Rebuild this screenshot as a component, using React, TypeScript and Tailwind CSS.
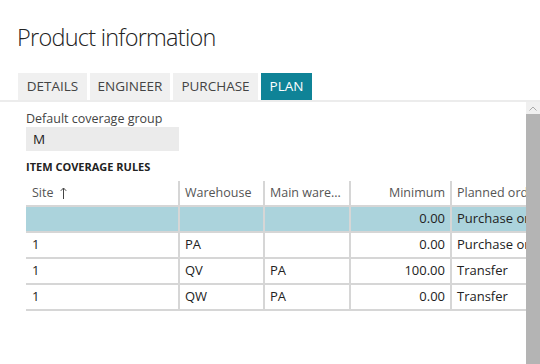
import React from "react";

const rows = [
  { site: "", wh: "", main: "", min: "0.00", plan: "Purchase order", sel: true },
  { site: "1", wh: "PA", main: "", min: "0.00", plan: "Purchase order" },
  { site: "1", wh: "QV", main: "PA", min: "100.00", plan: "Transfer" },
  { site: "1", wh: "QW", main: "PA", min: "0.00", plan: "Transfer" },
];

export default function App() {
  return (
    <div
      className="w-[540px] h-[364px] bg-white overflow-hidden flex flex-col"
      style={{ fontFamily: '"Open Sans", "Noto Sans", sans-serif' }}
    >
      <div className="pl-[17px] pt-[21px] h-[73px] text-[23.5px] font-light text-[#222] leading-[32px] tracking-[-0.75px]">
        Product information
      </div>
      <div className="flex pl-[18px] gap-[3px] h-[27px]">
        {[
          ["DETAILS", "w-[69px]"],
          ["ENGINEER", "w-[80px]"],
          ["PURCHASE", "w-[85px]"],
        ].map(([t, w]) => (
          <div
            key={t}
            className={`${w} bg-[#f0f0f0] text-[#444] text-[13.5px] flex items-center justify-center leading-none`}
          >
            {t}
          </div>
        ))}
        <div className="w-[51px] bg-[#0f8397] text-white text-[13.5px] flex items-center justify-center leading-none">
          PLAN
        </div>
      </div>
      <div className="flex flex-1 min-h-0 border-t-2 border-[#ececec]">
        <div className="flex-1 min-w-0 overflow-hidden pl-[26px]">
          <div className="text-[12.5px] text-[#444] mt-[9px] leading-[16px]">Default coverage group</div>
          <div className="w-[153px] h-[24px] bg-[#ebebeb] pl-[7px] text-[13.5px] text-[#222] leading-[24px]">
            M
          </div>
          <div className="mt-[9px] text-[11px] font-bold text-[#222] leading-[14px]">ITEM COVERAGE RULES</div>
          <div className="mt-[7px] w-[520px] text-[13px]">
            <div className="flex h-[26px] border-b-2 border-[#d6d6d6] text-[#555] text-[12.5px]">
              <div className="w-[154px] pl-[6px] flex items-center border-r-2 border-[#d6d6d6]">
                Site
                <svg className="ml-[7px]" width="7" height="12" viewBox="0 0 7 12">
                  <path d="M3.5 12 V1.2 M0.8 3.8 L3.5 1 L6.2 3.8" fill="none" stroke="#444" strokeWidth="1" />
                </svg>
              </div>
              <div className="w-[85px] pl-[5px] flex items-center border-r-2 border-[#d6d6d6]">Warehouse</div>
              <div className="w-[86px] pl-[5px] flex items-center border-r-2 border-[#d6d6d6]">Main ware...</div>
              <div className="w-[101px] pr-[5px] flex items-center justify-end border-r-2 border-[#d6d6d6]">Minimum</div>
              <div className="flex-1 pl-[5px] flex items-center whitespace-nowrap overflow-hidden">Planned order type</div>
            </div>
            {rows.map((r, i) => (
              <div
                key={i}
                className={`flex h-[26px] border-b-2 border-[#d6d6d6] text-[#222] ${r.sel ? "bg-[#abd3dc]" : ""}`}
              >
                <div className="w-[154px] pl-[6px] flex items-center border-r-2 border-[#d6d6d6]">{r.site}</div>
                <div className="w-[85px] pl-[5px] flex items-center border-r-2 border-[#d6d6d6]">{r.wh}</div>
                <div className="w-[86px] pl-[5px] flex items-center border-r-2 border-[#d6d6d6]">{r.main}</div>
                <div className="w-[101px] pr-[5px] flex items-center justify-end border-r-2 border-[#d6d6d6]">{r.min}</div>
                <div className="flex-1 pl-[5px] flex items-center whitespace-nowrap overflow-hidden">{r.plan}</div>
              </div>
            ))}
          </div>
        </div>
        <div className="w-[14px] flex flex-col">
          <div className="h-[12px] bg-[#f0f0f0] flex items-center justify-center">
            <svg width="8" height="5" viewBox="0 0 8 5">
              <path d="M0.5 4.5 L4 1 L7.5 4.5" fill="none" stroke="#aaa" strokeWidth="1" />
            </svg>
          </div>
          <div className="flex-1 bg-[#b4b4b4]" />
        </div>
      </div>
    </div>
  );
}
